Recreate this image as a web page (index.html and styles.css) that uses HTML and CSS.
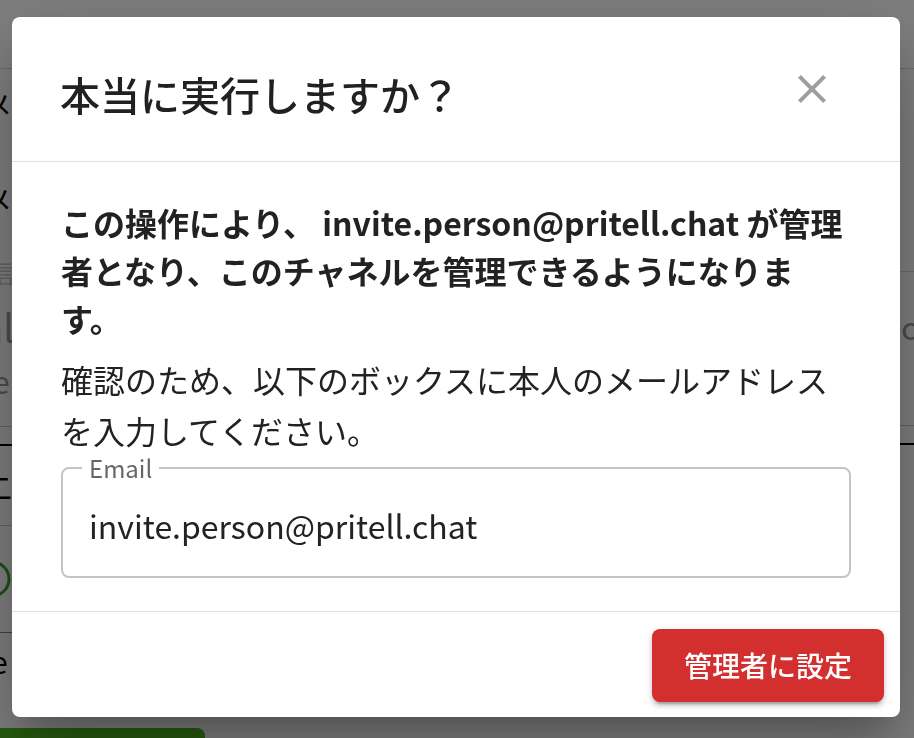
FILE: index.html
```html
<!DOCTYPE html>
<html lang="ja">
<head>
<meta charset="utf-8">
<title>確認</title>
<link rel="stylesheet" href="styles.css">
</head>
<body>
<div class="bg">
  <div class="bg-col bg-left">
    <div class="bg-bar"></div>
    <div class="bg-item it1 dark">メ</div>
    <div class="bg-item it2 dark">メ</div>
    <div class="bg-item it3 faint">信</div>
    <div class="bg-item it4 gray">nl</div>
    <div class="bg-item it5 gray">e</div>
    <div class="bg-item it6 line-gray"></div>
    <div class="bg-item it7 line-black"></div>
    <div class="bg-item it8 dark">二</div>
    <div class="bg-item it9 line-dark">
      <svg class="bg-check" width="40" height="40" viewBox="0 0 40 40"><circle cx="20" cy="20" r="17" fill="none" stroke="#3aa12a" stroke-width="3"/></svg>
    </div>
    <div class="bg-item it10 dark">e</div>
    <div class="bg-item it11"></div>
    <div class="bg-green"></div>
  </div>
  <div class="bg-col bg-right">
    <div class="bg-bar"></div>
    <div class="bg-item rt1"></div>
    <div class="bg-item rt2 gray">co</div>
    <div class="bg-item rt3 line-gray"></div>
    <div class="bg-item rt4 line-black"></div>
  </div>
</div>

<div class="backdrop">
  <div class="dialog" role="dialog">
    <header class="dlg-head">
      <h2 class="dlg-title">本当に実行しますか？</h2>
      <button class="dlg-close" aria-label="close">
        <svg width="48" height="48" viewBox="0 0 24 24"><path fill="#9e9e9e" d="M19 6.41 17.59 5 12 10.59 6.41 5 5 6.41 10.59 12 5 17.59 6.41 19 12 13.41 17.59 19 19 17.59 13.41 12z"/></svg>
      </button>
    </header>
    <section class="dlg-body">
      <p class="dlg-strong">この操作により、 invite.person@pritell.chat が管理者となり、このチャネルを管理できるようになります。</p>
      <p class="dlg-text">確認のため、以下のボックスに本人のメールアドレスを入力してください。</p>
      <fieldset class="field">
        <legend class="field-label">Email</legend>
        <input class="field-input" type="text" value="invite.person@pritell.chat">
      </fieldset>
    </section>
    <footer class="dlg-foot">
      <button class="btn-danger">管理者に設定</button>
    </footer>
  </div>
</div>
</body>
</html>
```

FILE: styles.css
```css
* { box-sizing: border-box; }
html, body { margin: 0; padding: 0; }
body {
  width: 914px;
  height: 738px;
  overflow: hidden;
  background: #fff;
  font-family: "Noto Sans CJK JP", "Noto Sans", sans-serif;
  color: #222;
}

/* underlying page */
.bg {
  display: grid;
  grid-template-columns: 457px 457px;
  height: 738px;
  overflow: hidden;
}
.bg-col { display: flex; flex-direction: column; overflow: hidden; }
.bg-bar { height: 69px; flex: none; border-bottom: 1px solid #d4d4d4; }
.bg-item { flex: none; white-space: nowrap; }
.dark { color: #000; }
.gray { color: #9a9a9a; }
.faint { color: #c8c8c8; }
.bg-left .bg-item { margin-left: -16px; padding-left: 0; }
.bg-left .line-gray, .bg-left .line-black, .bg-left .line-dark, .bg-left .it11 { margin-left: 0; }
.it1 { height: 72px; line-height: 72px; font-size: 28px; }
.it2 { height: 118px; line-height: 118px; font-size: 28px; }
.it3 { height: 28px; line-height: 28px; font-size: 24px; margin-left: -10px !important; }
.it4 { height: 80px; line-height: 80px; font-size: 38px; margin-left: -20px !important; }
.it5 { height: 26px; line-height: 26px; font-size: 32px; margin-left: -8px !important; }
.line-gray { height: 34px; border-bottom: 1px solid #c8c8c8; }
.line-black { height: 19px; border-bottom: 2px solid #000; }
.it8 { height: 80px; line-height: 80px; font-size: 30px; border-bottom: 1px solid #c8c8c8; margin-left: -18px !important; }
.line-dark { height: 107px; border-bottom: 1px solid #888; display: flex; align-items: center; }
.bg-check { margin-left: -28px; }
.it10 { height: 55px; line-height: 55px; font-size: 32px; margin-left: -10px !important; }
.it11 { height: 40px; }
.bg-green {
  width: 205px;
  height: 30px;
  flex: none;
  background: #4fb91f;
  border-top-right-radius: 8px;
}
.rt1 { height: 203px; border-bottom: 1px solid #d4d4d4; }
.rt2 { height: 108px; line-height: 108px; font-size: 32px; padding-left: 444px; }
.rt3 { height: 46px; }

/* overlay + dialog */
.backdrop {
  position: fixed;
  inset: 0;
  background: rgba(0, 0, 0, 0.5);
  display: flex;
  align-items: flex-start;
  justify-content: flex-start;
  padding: 17px 14px 0 12px;
}
.dialog {
  width: 888px;
  background: #fff;
  border-radius: 8px;
  box-shadow: 0 22px 30px -14px rgba(0,0,0,0.2), 0 48px 76px 6px rgba(0,0,0,0.14), 0 18px 92px 16px rgba(0,0,0,0.12);
  display: flex;
  flex-direction: column;
}
.dlg-head {
  height: 145px;
  border-bottom: 1px solid #e0e0e0;
  display: flex;
  align-items: center;
  justify-content: space-between;
  padding: 0 48px 0 48px;
}
.dlg-title {
  margin: 0;
  padding-top: 10px;
  font-size: 40px;
  font-weight: 500;
  line-height: 1.6;
  color: #212121;
}
.dlg-close {
  width: 80px;
  height: 80px;
  border: none;
  background: transparent;
  padding: 0;
  display: flex;
  align-items: center;
  justify-content: center;
  margin-right: 0;
}
.dlg-body {
  padding: 36px 49px 33px 49px;
}
.dlg-strong {
  margin: 0;
  font-size: 32px;
  font-weight: 700;
  line-height: 48px;
  color: #222;
}
.dlg-text {
  margin: 12px 0 0;
  font-size: 32px;
  font-weight: 400;
  line-height: 51px;
  color: #222;
}
.field {
  margin: 0;
  padding: 0 26px 6px;
  border: 2px solid #c4c4c4;
  border-radius: 8px;
  min-width: 0;
}
.field-label {
  padding: 0 7px;
  margin-left: -7px;
  font-size: 24px;
  line-height: 24px;
  color: #666;
}
.field-input {
  display: block;
  width: 100%;
  height: 90px;
  border: none;
  outline: none;
  padding: 0;
  background: transparent;
  font-family: "Noto Sans CJK JP", "Noto Sans", sans-serif;
  font-size: 32px;
  color: #222;
}
.dlg-foot {
  border-top: 1px solid #e0e0e0;
  padding: 17px 16px 15px;
  display: flex;
  justify-content: flex-end;
}
.btn-danger {
  height: 73px;
  padding: 0 32px;
  border: none;
  border-radius: 8px;
  background: #d32f2f;
  color: #fff;
  font-family: "Noto Sans CJK JP", "Noto Sans", sans-serif;
  font-size: 28px;
  font-weight: 500;
  letter-spacing: 0;
  line-height: 49px;
  box-shadow: 0 6px 2px -4px rgba(0,0,0,0.2), 0 4px 4px 0 rgba(0,0,0,0.14), 0 2px 10px 0 rgba(0,0,0,0.12);
}
```
